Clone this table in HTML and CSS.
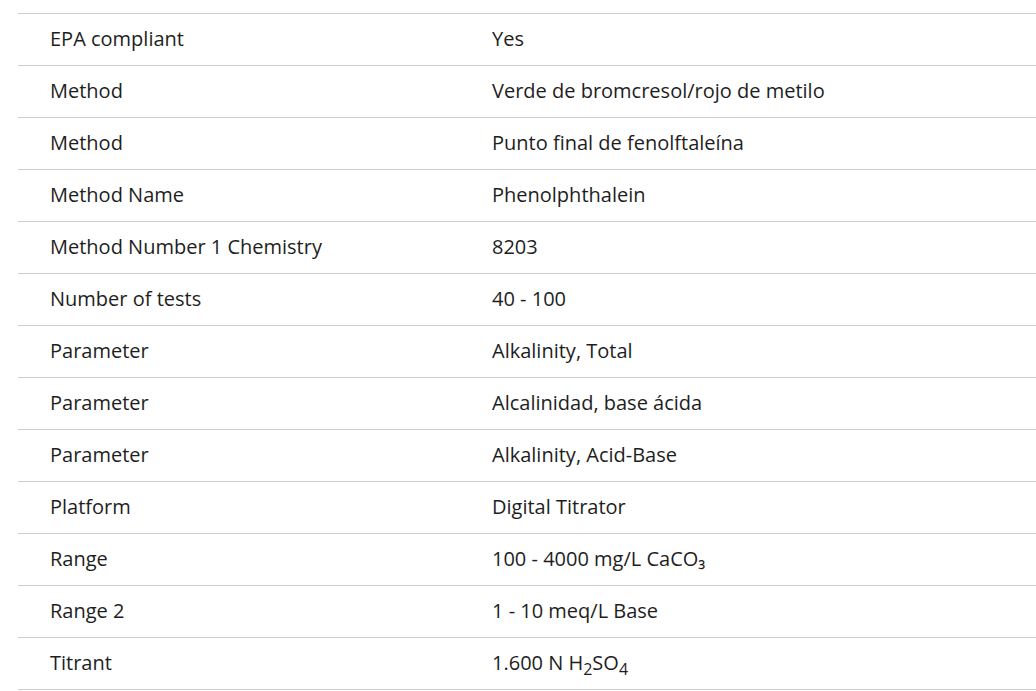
FILE: index.html
```html
<!DOCTYPE html>
<html>
<head>
<meta charset="utf-8">
<link rel="stylesheet" href="styles.css">
</head>
<body>
<div class="wrap">
<table class="specs">
<tbody>
<tr><td>EPA compliant</td><td>Yes</td></tr>
<tr><td>Method</td><td>Verde de bromcresol/rojo de metilo</td></tr>
<tr><td>Method</td><td>Punto final de fenolftaleína</td></tr>
<tr><td>Method Name</td><td>Phenolphthalein</td></tr>
<tr><td>Method Number 1 Chemistry</td><td>8203</td></tr>
<tr><td>Number of tests</td><td>40 - 100</td></tr>
<tr><td>Parameter</td><td>Alkalinity, Total</td></tr>
<tr><td>Parameter</td><td>Alcalinidad, base ácida</td></tr>
<tr><td>Parameter</td><td>Alkalinity, Acid-Base</td></tr>
<tr><td>Platform</td><td>Digital Titrator</td></tr>
<tr><td>Range</td><td>100 - 4000 mg/L CaCO₃</td></tr>
<tr><td>Range 2</td><td>1 - 10 meq/L Base</td></tr>
<tr><td>Titrant</td><td>1.600 N H<sub>2</sub>SO<sub>4</sub></td></tr>
</tbody>
</table>
</div>
</body>
</html>
```
FILE: styles.css
```css
html, body {
  margin: 0;
  padding: 0;
  background: #fff;
}
.wrap {
  padding: 13px 0 0 18px;
}
.specs {
  border-collapse: collapse;
  width: 1018px;
  font-family: "Open Sans", "Liberation Sans", sans-serif;
  font-size: 20px;
  color: #1e1e1e;
}
.specs td {
  border-top: 1px solid #ccc;
  border-bottom: 1px solid #ccc;
  height: 52px;
  padding: 0 0 2px 32px;
  vertical-align: middle;
  box-sizing: border-box;
  line-height: 26px;
}
.specs td:first-child {
  width: 442px;
}
.specs sub {
  font-size: 16px;
  line-height: 0;
  vertical-align: -5px;
}
```
